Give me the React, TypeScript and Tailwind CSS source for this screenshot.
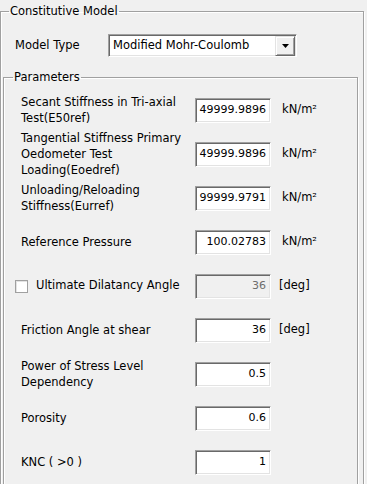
import React from 'react';

function Field({ value, disabled }: { value: string; disabled?: boolean }) {
  return (
    <div
      className={`w-[76px] h-[25px] shrink-0 text-[11px] border border-t-[#a0a0a0] border-l-[#a0a0a0] border-b-white border-r-white shadow-[inset_1px_1px_0_#696969,inset_-1px_-1px_0_#e3e3e3] flex items-center justify-end pr-[4px] ${
        disabled ? 'bg-[#f0f0f0] text-[#6d6d6d]' : 'bg-white text-black'
      }`}
    >
      {value}
    </div>
  );
}

function Row({ label, value, unit, unitGap }: { label: React.ReactNode; value: string; unit?: string; unitGap?: string }) {
  return (
    <div className="flex items-center h-[44px]">
      <div className="w-[174px] shrink-0 leading-[16px]">{label}</div>
      <Field value={value} />
      {unit && <span className={unitGap ?? 'ml-[11px]'}>{unit}</span>}
    </div>
  );
}

export default function App() {
  return (
    <div className="w-[367px] h-[484px] overflow-hidden bg-[#f0f0f0] text-[11.5px] text-black font-['DejaVu_Sans',sans-serif]">
      {/* Constitutive Model group */}
      <fieldset className="w-[364px] mt-[4px] border border-[#a0a0a0] shadow-[1px_1px_0_white,inset_1px_1px_0_white] pb-4">
        <legend className="ml-[8px] px-[1px] leading-[14px]">Constitutive Model</legend>

        <div className="flex items-center h-[23px] mt-[16px] pl-[14px]">
          <span className="w-[93px] shrink-0">Model Type</span>
          <div className="w-[189px] h-[23px] flex items-center bg-white border border-t-[#a0a0a0] border-l-[#a0a0a0] border-b-white border-r-white shadow-[inset_1px_1px_0_#696969,inset_-1px_-1px_0_#e3e3e3] pl-[4px] pr-[1px]">
            <span className="flex-1">Modified Mohr-Coulomb</span>
            <div className="w-[20px] h-[20px] bg-[#f0f0f0] border border-t-[#e3e3e3] border-l-[#e3e3e3] border-b-[#696969] border-r-[#696969] shadow-[inset_1px_1px_0_white,inset_-1px_-1px_0_#a0a0a0] flex items-center justify-center">
              <svg width="7" height="4" viewBox="0 0 7 4">
                <path d="M0 0h7L3.5 4z" fill="#000" />
              </svg>
            </div>
          </div>
        </div>

        {/* Parameters group */}
        <fieldset className="w-[355px] ml-[2px] mt-[13px] h-[420px] border border-[#a0a0a0] shadow-[1px_1px_0_white,inset_1px_1px_0_white] pl-[17px] pt-[4px]">
          <legend className="-ml-[8px] px-[1px] leading-[14px]">Parameters</legend>

          <Row label={<>Secant Stiffness in Tri-axial<br />Test(E50ref)</>} value="49999.9896" unit="kN/m²" />
          <Row label={<>Tangential Stiffness Primary<br />Oedometer Test<br />Loading(Eoedref)</>} value="49999.9896" unit="kN/m²" />
          <Row label={<>Unloading/Reloading<br />Stiffness(Eurref)</>} value="99999.9791" unit="kN/m²" />
          <Row label="Reference Pressure" value="100.02783" unit="kN/m²" />

          <div className="flex items-center h-[44px]">
            <div className="w-[174px] shrink-0 -ml-[6px] mr-[6px] flex items-center">
              <span className="w-[13px] h-[13px] bg-white border border-[#a0a0a0] shadow-[inset_1px_1px_0_#e3e3e3]" />
              <span className="ml-[8px]">Ultimate Dilatancy Angle</span>
            </div>
            <Field value="36" disabled />
            <span className="ml-[8px]">[deg]</span>
          </div>

          <Row label="Friction Angle at shear" value="36" unit="[deg]" unitGap="ml-[8px]" />
          <Row label={<>Power of Stress Level<br />Dependency</>} value="0.5" />
          <Row label="Porosity" value="0.6" />
          <Row label="KNC ( >0 )" value="1" />
        </fieldset>
      </fieldset>
    </div>
  );
}
